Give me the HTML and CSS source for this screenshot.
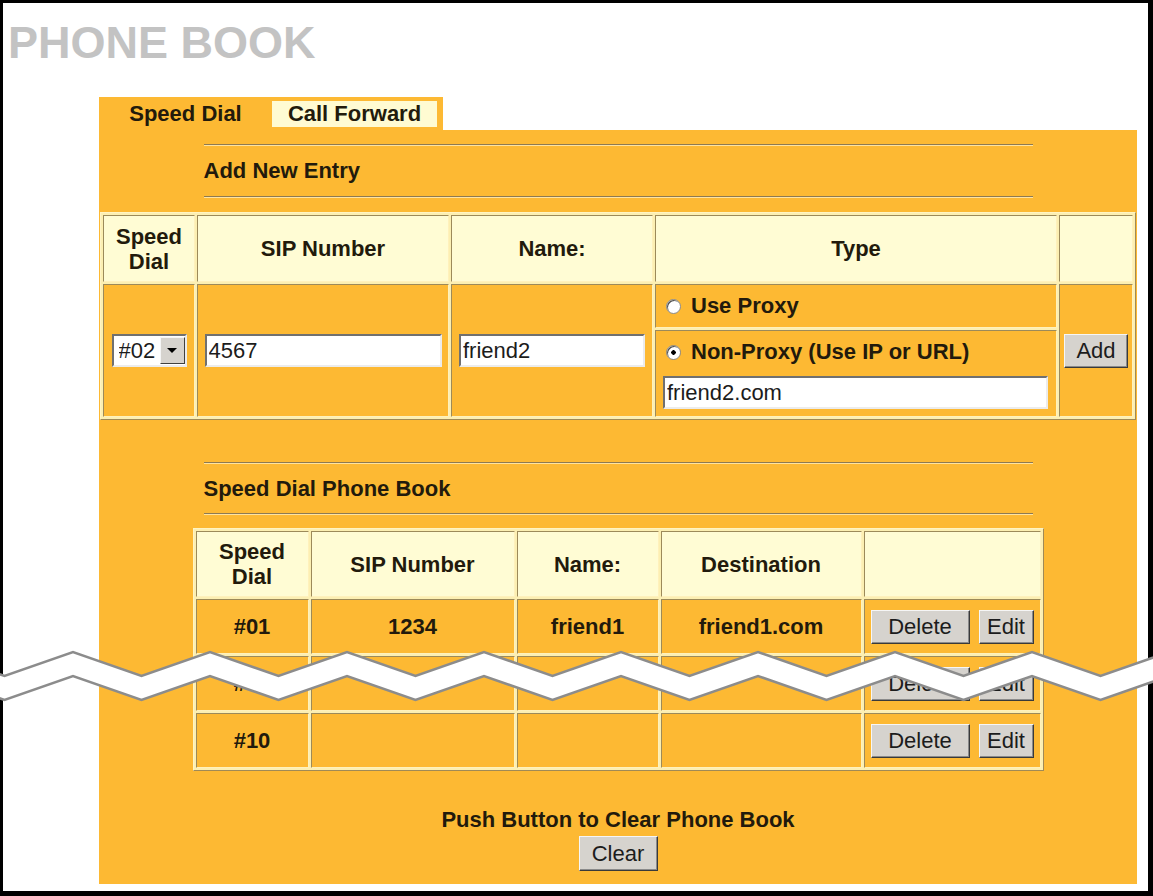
FILE: index.html
```html
<!DOCTYPE html>
<html lang="en">
<head>
	<meta charset="UTF-8">
	<title>Phone Book</title>
	<link rel="stylesheet" href="styles.css">
</head>
<body>
<div id="frame">
	<h1 class="title">PHONE BOOK</h1>
	<div id="book">
		<div class="tabs"><span class="tab on">Speed Dial</span><span class="tab off">Call Forward</span></div>
		<div class="panel">
			<hr class="rule">
			<h2 class="sect">Add New Entry</h2>
			<hr class="rule">
			<table class="grid add">
				<tr>
					<th class="c-dial">Speed<br>Dial</th>
					<th class="c-sip">SIP Number</th>
					<th class="c-name">Name:</th>
					<th class="c-type">Type</th>
					<th class="c-add"></th>
				</tr>
				<tr>
					<td rowspan="2"><span class="pick"><select><option>#02</option></select><span class="pick-btn"></span></span></td>
					<td rowspan="2"><input type="text" class="field w-sip" value="4567"></td>
					<td rowspan="2"><input type="text" class="field w-name" value="friend2"></td>
					<td class="opt proxy"><input type="radio" name="type" class="radio">Use Proxy</td>
					<td rowspan="2"><button class="btn b-add">Add</button></td>
				</tr>
				<tr>
					<td class="opt direct">
						<div><input type="radio" name="type" class="radio" checked>Non-Proxy (Use IP or URL)</div>
						<input type="text" class="field w-url" value="friend2.com">
					</td>
				</tr>
			</table>

			<hr class="rule gap">
			<h2 class="sect low">Speed Dial Phone Book</h2>
			<hr class="rule">
			<table class="grid list">
				<tr>
					<th class="l-dial">Speed<br>Dial</th>
					<th class="l-sip">SIP Number</th>
					<th class="l-name">Name:</th>
					<th class="l-dest">Destination</th>
					<th class="l-act"></th>
				</tr>
				<tr>
					<td>#01</td><td>1234</td><td>friend1</td><td>friend1.com</td>
					<td><div class="acts"><button class="btn b-del">Delete</button><button class="btn b-edit">Edit</button></div></td>
				</tr>
				<tr>
					<td>#09</td><td></td><td></td><td></td>
					<td><div class="acts"><button class="btn b-del">Delete</button><button class="btn b-edit">Edit</button></div></td>
				</tr>
				<tr>
					<td>#10</td><td></td><td></td><td></td>
					<td><div class="acts"><button class="btn b-del">Delete</button><button class="btn b-edit">Edit</button></div></td>
				</tr>
			</table>
			<p class="note">Push Button to Clear Phone Book</p>
			<div class="clear-row"><button class="btn b-clear">Clear</button></div>
		</div>
	</div>
	<!-- torn edge across the list: rows #02 to #08 left out -->
	<svg class="cut" width="1153" height="80" viewBox="0 0 1153 80">
		<polygon fill="#fff" points="-64,12 4.5,36 73,12 141.5,36 210,12 278.5,36 347,12 415.5,36 484,12 552.5,36 621,12 689.5,36 758,12 826.5,36 895,12 963.5,36 1032,12 1100.5,36 1169,12 1237.5,36 1237.5,60 1169,36 1100.5,60 1032,36 963.5,60 895,36 826.5,60 758,36 689.5,60 621,36 552.5,60 484,36 415.5,60 347,36 278.5,60 210,36 141.5,60 73,36 4.5,60 -64,36"/>
		<polyline fill="none" stroke="#8c8c8c" stroke-width="2.5" points="-64,12 4.5,36 73,12 141.5,36 210,12 278.5,36 347,12 415.5,36 484,12 552.5,36 621,12 689.5,36 758,12 826.5,36 895,12 963.5,36 1032,12 1100.5,36 1169,12 1237.5,36"/>
		<polyline fill="none" stroke="#8c8c8c" stroke-width="2.5" points="-64,36 4.5,60 73,36 141.5,60 210,36 278.5,60 347,36 415.5,60 484,36 552.5,60 621,36 689.5,60 758,36 826.5,60 895,36 963.5,60 1032,36 1100.5,60 1169,36 1237.5,60"/>
	</svg>
</div>
</body>
</html>
```

FILE: styles.css
```css
*{margin:0;padding:0;box-sizing:border-box;}
body{background:#fff;font-family:"Liberation Sans",Arial,sans-serif;color:#221a0c;overflow:hidden;}
#frame{position:relative;width:1153px;height:896px;border:3px solid #000;border-right-width:5px;border-bottom-width:5px;background:#fff;}
.title{font-size:45px;line-height:45px;font-weight:bold;color:#c3c3c3;margin:17px 0 0 5px;}

#book{margin:32px 0 0 96px;width:1038px;}
.tabs{display:flex;width:344px;background:#fdb933;padding:4px 6px 3px 0;}
.tab{height:26px;line-height:26px;text-align:center;font-size:22px;font-weight:bold;}
.tab.on{width:173px;}
.tab.off{width:165px;background:#fffbd2;}

.panel{background:#fdb933;padding:14px 0 13px;}
.rule{width:829px;height:2px;margin:0 auto;border:0;border-top:1px solid #8d7a52;border-bottom:1px solid #ffe3a0;}
.rule.gap{margin-top:42px;}
.sect{width:829px;margin:0 auto;font-size:22px;line-height:50px;}
.sect.low{line-height:49px;}

/* old style 3d table: outset frame, inset cells */
.grid{border-collapse:separate;border-spacing:2px;table-layout:fixed;background:#fcefb2;border:1px solid;border-color:#fff4c4 #a08a56 #a08a56 #fff4c4;}
.grid th,.grid td{border:1px solid;border-color:#9c8a5a #fff1bc #fff1bc #9c8a5a;text-align:center;vertical-align:middle;font-size:22px;font-weight:bold;line-height:22px;}
.grid th{background:#fffcd4;line-height:25px;}
.grid td{background:#fdb933;}

.add{width:1036px;margin:14px 1px 0;}
.add th{height:67px;}
.c-dial{width:92px;}
.c-sip{width:252px;}
.c-name{width:202px;}
.c-type{width:402px;}
.c-add{width:74px;}
.opt{text-align:left !important;padding-left:10px;}
.proxy{height:44px;}
.direct{height:87px;padding:10px 7px 7px 10px;}
.direct .field{margin-left:-3px;}

.list{width:851px;margin:13px auto 0;}
.list th{height:66px;}
.list td{height:55px;}
.l-dial{width:113px;}
.l-sip{width:204px;}
.l-name{width:142px;}
.l-dest{width:201px;}
.l-act{width:177px;}
.acts{display:flex;justify-content:center;gap:9px;}

.field{height:33px;border:2px solid;border-color:#707070 #ececec #ececec #707070;background:#fff;font-family:"Liberation Sans",Arial,sans-serif;font-size:22px;padding:0 2px;color:#1c1c1c;vertical-align:middle;outline:none;}
.w-sip{width:237px;}
.w-name{width:186px;}
.w-url{display:block;width:385px;margin-top:13px;}

.pick{display:inline-flex;width:75px;height:33px;border:2px solid;border-color:#707070 #ececec #ececec #707070;background:#fff;vertical-align:middle;}
.pick select{appearance:none;-webkit-appearance:none;border:0;background:transparent;width:46px;padding-left:5px;font-family:"Liberation Sans",Arial,sans-serif;font-size:22px;color:#1c1c1c;outline:none;}
.pick-btn{display:flex;align-items:center;justify-content:center;width:25px;margin:1px 0;background:#d6d3ce;border:1px solid;border-color:#f6f6f6 #404040 #404040 #f6f6f6;}
.pick-btn::before{content:"";border-left:5px solid transparent;border-right:5px solid transparent;border-top:5px solid #000;}

.radio{appearance:none;-webkit-appearance:none;width:15px;height:15px;border-radius:50%;background:#fff;border:1px solid #8a8a8a;box-shadow:inset 1px 1px #505050;margin:0 10px 0 0;vertical-align:-1px;}
.radio:checked{background:radial-gradient(circle,#000 0 2px,#fff 2.5px);}

.btn{font-family:"Liberation Sans",Arial,sans-serif;font-size:22px;color:#1c1c1c;background:#d6d3ce;height:34px;border:1px solid;border-color:#f6f6f6 #3a3a3a #3a3a3a #f6f6f6;box-shadow:inset -1px -1px #8a8a8a;vertical-align:middle;}
.b-add{width:64px;}
.b-del{width:99px;}
.b-edit{width:55px;}
.b-clear{width:79px;height:35px;}

.note{text-align:center;font-size:22px;font-weight:bold;line-height:22px;margin-top:38px;}
.clear-row{display:flex;justify-content:center;margin-top:5px;}

.cut{position:absolute;left:-3px;top:637px;}
```
